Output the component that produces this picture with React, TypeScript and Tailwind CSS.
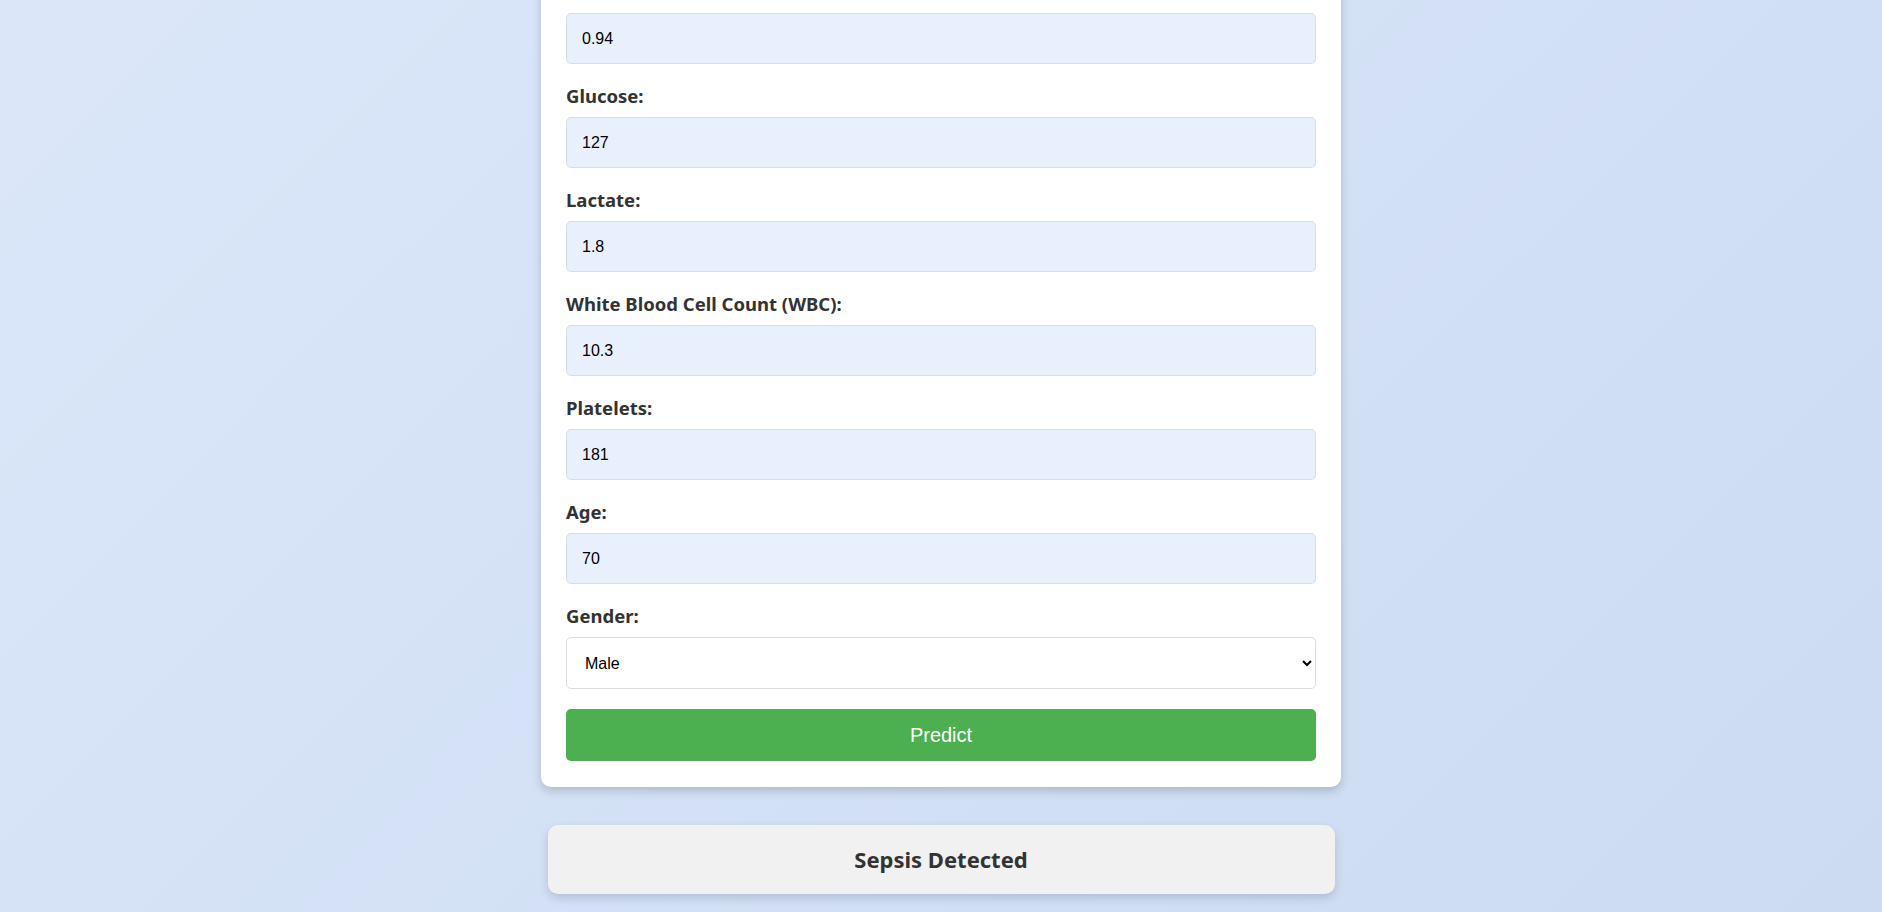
import React, { useState } from "react";

type Field = { id: string; label: string; value: string };

const fields: Field[] = [
  { id: "creatinine", label: "Creatinine:", value: "0.94" },
  { id: "glucose", label: "Glucose:", value: "127" },
  { id: "lactate", label: "Lactate:", value: "1.8" },
  { id: "wbc", label: "White Blood Cell Count (WBC):", value: "10.3" },
  { id: "platelets", label: "Platelets:", value: "181" },
  { id: "age", label: "Age:", value: "70" },
];

const labelCls =
  "block h-[25px] mb-[9px] text-[18.5px] leading-[25px] font-bold text-[#333] font-['Noto_Sans',sans-serif]";

export default function App() {
  const [values, setValues] = useState<Record<string, string>>(
    Object.fromEntries(fields.map((f) => [f.id, f.value]))
  );
  const [gender, setGender] = useState("Male");

  return (
    <div className="min-h-screen w-full overflow-hidden bg-[linear-gradient(135deg,#dbe7f9,#ccdbf2)]">
      <div className="flex flex-col items-center">
        {/* form card, page is scrolled so its top sits above the fold */}
        <div className="w-[800px] -mt-[46px] bg-white rounded-[10px] px-[25px] pt-[25px] pb-[26px] shadow-[0_4px_10px_rgba(0,0,0,0.18)]">
          {fields.map((f) => (
            <div key={f.id} className="mb-[19px]">
              <label htmlFor={f.id} className={labelCls}>
                {f.label}
              </label>
              <input
                id={f.id}
                value={values[f.id]}
                onChange={(e) => setValues({ ...values, [f.id]: e.target.value })}
                className="block w-full h-[51px] px-[15px] bg-[#e8f0fe] border border-[#dadce0] rounded-[5px] text-[16px] text-black font-['Liberation_Sans',Arial,sans-serif] outline-none"
              />
            </div>
          ))}

          <div>
            <label htmlFor="gender" className={labelCls}>
              Gender:
            </label>
            <select
              id="gender"
              value={gender}
              onChange={(e) => setGender(e.target.value)}
              className="block w-full h-[52px] pl-[14px] pr-[10px] bg-white border border-[#dddddd] rounded-[5px] text-[16px] text-black font-['Liberation_Sans',Arial,sans-serif] outline-none"
            >
              <option>Male</option>
              <option>Female</option>
            </select>
          </div>

          <button className="mt-[20px] w-full h-[52px] bg-[#4caf50] rounded-[5px] text-white text-[20px] font-['Liberation_Sans',Arial,sans-serif]">
            Predict
          </button>
        </div>

        {/* prediction result */}
        <div className="mt-[38px] mb-[30px] w-[787px] h-[69px] flex items-center justify-center bg-[#f1f1f1] rounded-[10px] shadow-[0_4px_10px_rgba(0,0,0,0.15)]">
          <h3 className="text-[22px] font-bold text-[#333] font-['Noto_Sans',sans-serif]">
            Sepsis Detected
          </h3>
        </div>
      </div>
    </div>
  );
}
